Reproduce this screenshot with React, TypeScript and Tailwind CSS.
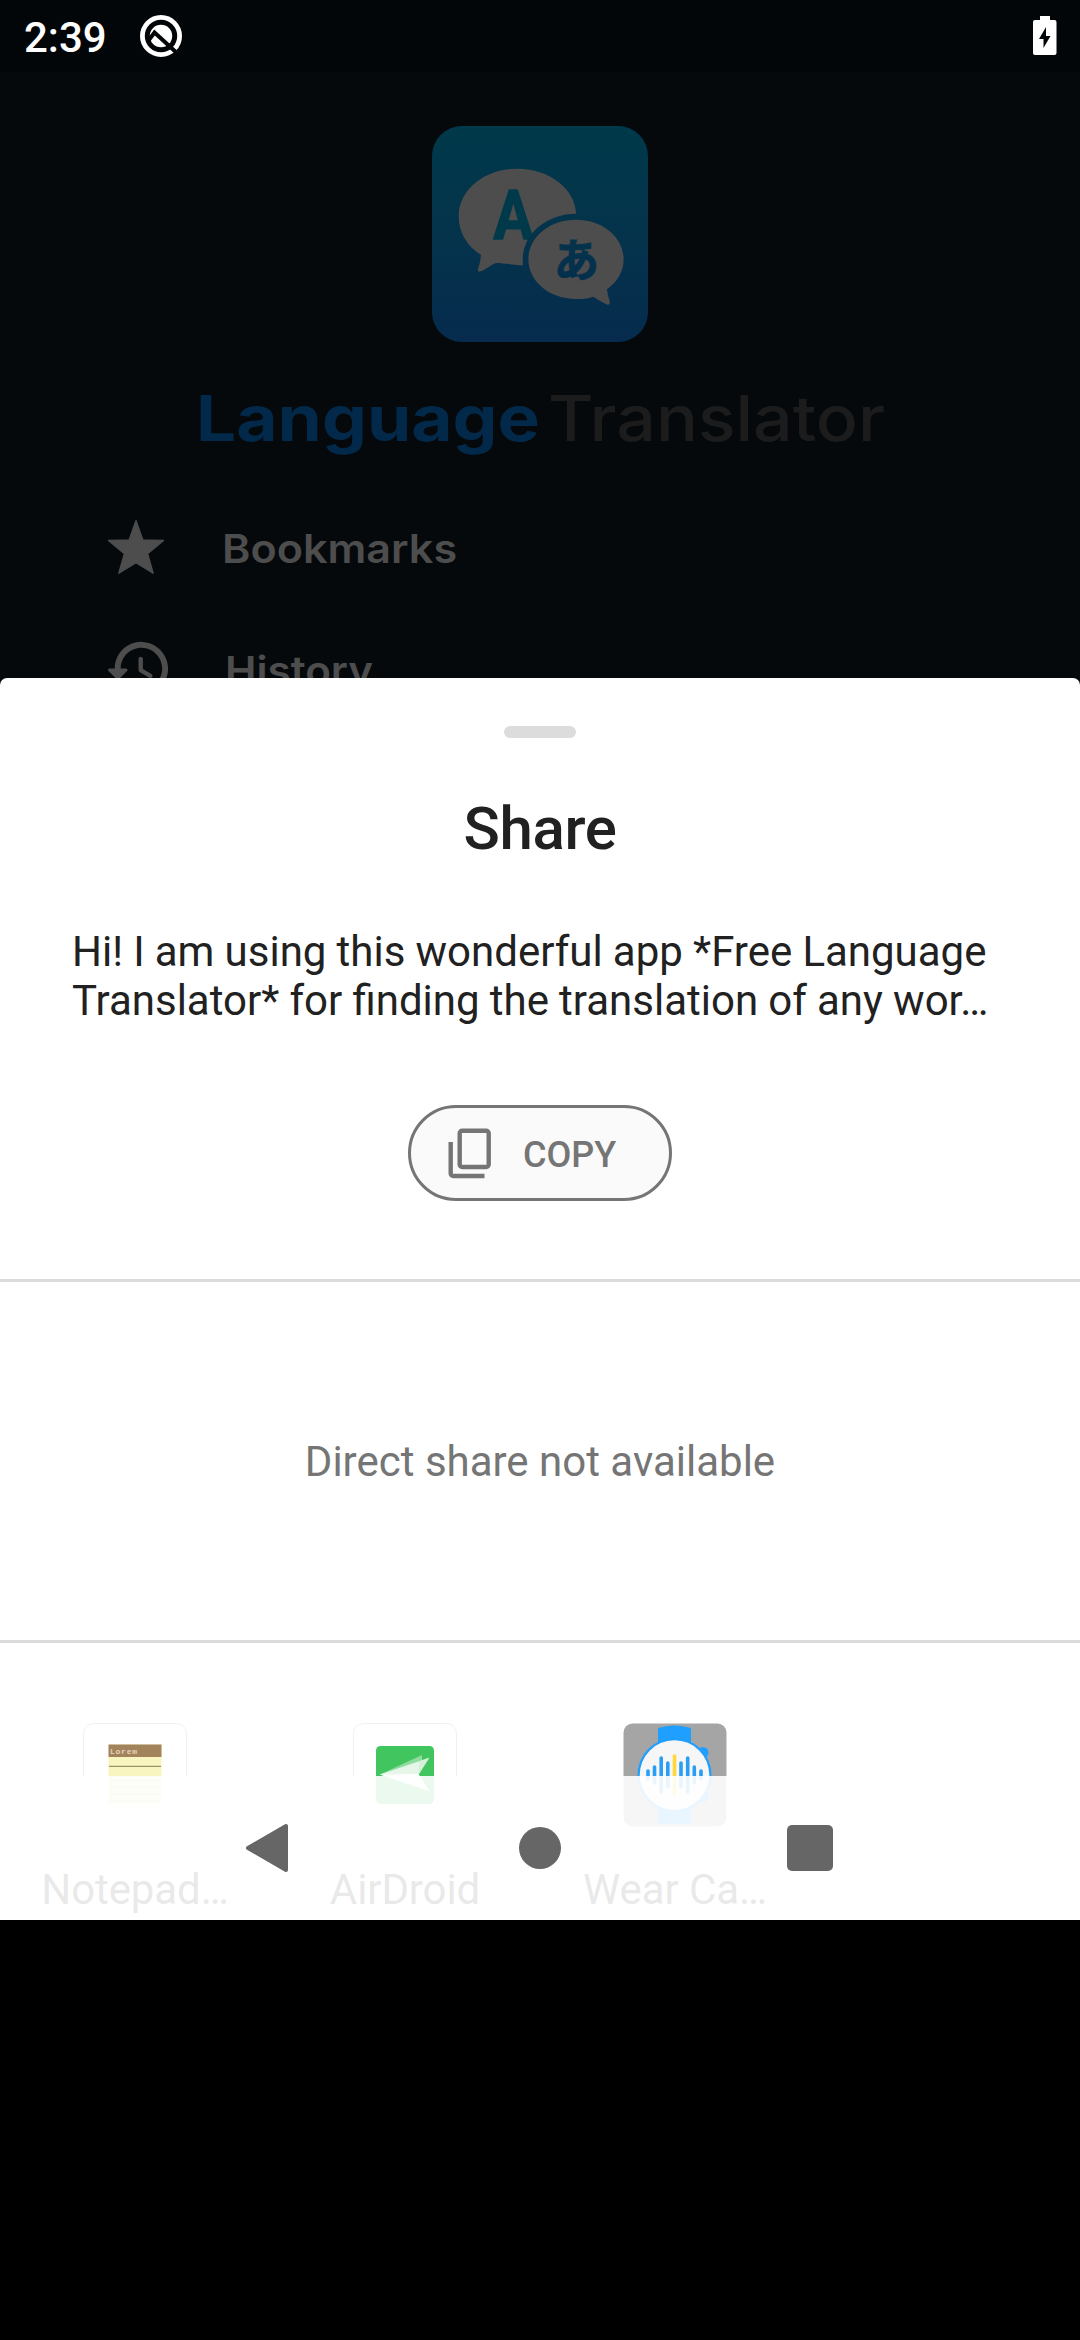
function StatusBar() {
  return (
    <div className="flex h-[72px] items-start justify-between bg-[#020609] pr-[23px] pl-6 text-white">
      <div className="flex">
        <span className="w-[116px] pt-[2px] text-[42px] leading-[72px] font-medium">2:39</span>
        <svg className="mt-[14px]" width="44" height="44" viewBox="0 0 44 44" fill="none">
          <circle cx="21" cy="22" r="18.6" stroke="#fff" strokeWidth="4.800" />
          <circle cx="21" cy="22" r="11.2" fill="#fff" />
          <path d="M8.500 26.500L14.500 18.500L38 40" stroke="#020609" strokeWidth="4" />
        </svg>
      </div>
      <svg className="mt-4" width="24" height="39" viewBox="0 0 24 39">
        <path
          fill="#fff"
          d="M7 0h10v4h4.500a2 2 0 0 1 2 2v31a2 2 0 0 1-2 2h-19.500a2 2 0 0 1-2-2v-31a2 2 0 0 1 2-2h5z"
        />
        <path fill="#020609" d="M13 11L6 23h4.500v9L17.500 20H13z" />
      </svg>
    </div>
  );
}

function AppLogo() {
  return (
    <svg className="size-[216px] rounded-[30px]" viewBox="96 78 648 648">
      <defs>
        <linearGradient id="sky" gradientUnits="userSpaceOnUse" x1="0" y1="78" x2="0" y2="726">
          <stop offset="0" stopColor="#00394a" />
          <stop offset="0.500" stopColor="#04334b" />
          <stop offset="1" stopColor="#062b4e" />
        </linearGradient>
      </defs>
      <rect x="96" y="78" width="648" height="648" fill="url(#sky)" />
      <path
        fill="#4d4d4d"
        d="M352 206C450 206 529 268 529 348C529 440 450 496 368 496C340 496 312 489 288 489C268 496 256 512 238 515Q230 514 235 504Q241 488 243 465C202 440 176 398 176 348C176 270 254 206 352 206Z"
      />
      <text
        transform="translate(280 416) scale(0.860 1)"
        fill="url(#sky)"
        stroke="url(#sky)"
        strokeWidth="4"
        fontFamily="Roboto"
        fontWeight="700"
        fontSize="208"
      >
        A
      </text>
      <ellipse cx="528" cy="478" rx="160" ry="137" fill="url(#sky)" />
      <path
        fill="#4d4d4d"
        d="M528 359C608 359 671 412 671 478C671 514 652 546 621 568Q623 588 630 606Q630 616 622 614Q600 604 580 590C564 596 546 597 528 597C448 597 385 544 385 478C385 412 448 359 528 359Z"
      />
      <text
        x="461"
        y="530"
        fill="url(#sky)"
        stroke="url(#sky)"
        strokeWidth="3"
        fontFamily="Noto Sans CJK JP"
        fontWeight="700"
        fontSize="136"
      >
        あ
      </text>
    </svg>
  );
}

function DimmedPage() {
  return (
    <div className="flex h-[606px] flex-col overflow-hidden pt-[54px] font-['Inter',sans-serif]">
      <div className="flex justify-center">
        <AppLogo />
      </div>
      <h1 className="mt-[36px] flex h-20 pl-[196px] text-[63px] leading-[80px] whitespace-nowrap">
        <span className="w-[352px] font-bold text-[#03294a]">
          <span className="inline-block origin-left scale-x-[1.130]">Language</span>
        </span>
        <span className="font-medium text-[#1c1c1c]">
          <span className="inline-block origin-left scale-x-[1.108]">Translator</span>
        </span>
      </h1>
      <div className="mt-[56px] flex h-[68px] pl-[102px] text-[#4d4d4d]">
        <svg width="68" height="68" viewBox="0 0 24 24" fill="currentColor">
          <path
            stroke="currentColor"
            strokeWidth="0.500"
            strokeLinejoin="round"
            d="M12 17.200L18.050 20.900L16.100 14L21.700 9.300L14.400 9.200L12 2.400L9.600 9.200L2.300 9.300L7.900 14L5.950 20.900Z"
          />
        </svg>
        <span className="ml-[52px] origin-left scale-x-[1.078] pt-[1px] text-[40px] leading-[68px] font-semibold">
          Bookmarks
        </span>
      </div>
      <div className="mt-[51px] flex h-[71px] shrink-0 pl-[103px] text-[#4d4d4d]">
        <svg width="71" height="71" viewBox="0 0 24 24" fill="currentColor">
          <path d="M13.260 3C8.170 2.860 4 6.950 4 12H2.210c-.45 0-.67.54-.35.850l2.790 2.800c.2.200.510.200.710 0l2.790-2.800c.310-.310.090-.850-.360-.850H6c0-3.900 3.180-7.050 7.100-7 3.720.050 6.850 3.180 6.900 6.900.050 3.910-3.100 7.100-7 7.100-1.610 0-3.100-.550-4.280-1.480-.400-.310-.960-.280-1.320.080-.420.420-.390 1.130.080 1.490C9 20.290 10.910 21 13 21c5.050 0 9.140-4.170 9-9.260C21.870 7.050 17.950 3.130 13.260 3zM12.750 8c-.410 0-.750.340-.750.750v3.680c0 .350.190.680.490.860l3.120 1.850c.360.210.820.090 1.030-.260.210-.360.090-.820-.260-1.030l-2.880-1.710v-3.400c0-.400-.340-.740-.750-.740z" />
        </svg>
        <span className="ml-[51px] origin-left scale-x-[1.055] pt-[2px] text-[40px] leading-[72px] font-semibold">
          History
        </span>
      </div>
    </div>
  );
}

function NotepadIcon() {
  return (
    <svg width="112" height="112" viewBox="79 1719 112 112">
      <rect x="83.500" y="1723.500" width="103" height="103" rx="10" fill="#fff" stroke="#f0f0f0" />
      <rect x="108.500" y="1744.500" width="53" height="60" fill="#f8f5c0" />
      <rect x="108.500" y="1744.500" width="53" height="12.500" fill="#a3835b" />
      <text x="110" y="1753.500" fontSize="8" fontFamily="Liberation Mono" fontWeight="700" fill="#e3d5c0" textLength="27">
        Lorem
      </text>
      <path d="M109 1766.300h52" stroke="#9a9264" strokeWidth="1.200" />
      <path d="M109 1780.500h52M109 1787.300h52M109 1794h52M109 1801h52" stroke="#c9c38c" strokeWidth="1.200" />
    </svg>
  );
}

function AirDroidIcon() {
  return (
    <svg width="112" height="112" viewBox="349 1719 112 112">
      <rect x="353.500" y="1723.500" width="103" height="103" rx="10" fill="#fff" stroke="#f0f0f0" />
      <rect x="376" y="1746" width="58" height="58" rx="4.500" fill="#40c55f" />
      <path d="M380 1774.500L422 1755V1762L418 1775Z" fill="#8fdc9f" />
      <path d="M380 1774.500L429.500 1757.500L418.500 1775Z" fill="#d5f1da" />
      <path d="M380 1774.500L419 1762L418.500 1775L429.500 1791Z" fill="#e6f7e9" />
      <path d="M380 1774.500L418.500 1774L429.500 1791Z" fill="#fff" />
    </svg>
  );
}

const BARS = [
  [648, 6],
  [654.5, 10],
  [661.2, 19],
  [667.8, 14],
  [674.5, 21],
  [681, 14],
  [687.7, 19],
  [694.3, 10],
  [701, 6],
];

function WearIcon() {
  return (
    <svg width="112" height="112" viewBox="619 1719 112 112">
      <rect x="623.500" y="1723.500" width="103" height="103" rx="9" fill="#a5a5a5" />
      <path d="M658 1728Q674.500 1723 691 1728V1824H658Z" fill="#1f9fff" />
      <circle cx="703" cy="1752.500" r="5.500" fill="#1f9fff" />
      <circle cx="703" cy="1797" r="5.500" fill="#1f9fff" />
      <circle cx="674.500" cy="1775" r="37" fill="#1f9fff" />
      <circle cx="674.500" cy="1775" r="34.800" fill="#f6f6f6" />
      {BARS.map(([x, h]) => (
        <path
          key={x}
          d={`M${x} ${1777 - h}V${1773 + h}`}
          stroke={x === 674.5 ? "#ffd83a" : "#2a9df4"}
          strokeWidth="3.600"
          strokeLinecap="round"
        />
      ))}
    </svg>
  );
}

const TARGETS = [
  { label: "Notepad…", icon: <NotepadIcon /> },
  { label: "AirDroid", icon: <AirDroidIcon /> },
  { label: "Wear Ca…", icon: <WearIcon /> },
];

function NavBar() {
  return (
    <div className="absolute inset-x-0 bottom-0 flex h-36 justify-center bg-white/90">
      <div className="grid w-[810px] grid-cols-3 place-items-center">
        <svg className="-translate-x-[3px]" width="48" height="50" viewBox="0 0 48 50">
          <path
            d="M5 25L43 3V47Z"
            fill="#666"
            stroke="#666"
            strokeWidth="4"
            strokeLinejoin="round"
          />
        </svg>
        <div className="size-[42px] rounded-full bg-[#666]" />
        <div className="size-[46px] rounded-[5px] bg-[#666]" />
      </div>
    </div>
  );
}

function ShareSheet() {
  return (
    <div className="relative flex h-[1242px] flex-col overflow-hidden rounded-t-[7px] bg-white pt-12">
      <div className="h-3 w-[72px] self-center rounded-full bg-[#dcdcdc]" />
      <h2 className="mt-[56px] text-center text-[60px] leading-[70px] font-medium tracking-[-0.4px] text-[#212121]">
        Share
      </h2>
      <p className="mt-[63px] pl-[72px] text-[42px] leading-[49px] [word-spacing:-0.25px] whitespace-nowrap text-[#212121]">
        Hi! I am using this wonderful app *Free Language
        <br />
        Translator* for finding the translation of any wor…
      </p>
      <button className="mt-20 flex h-24 w-[264px] items-center self-center rounded-full border-3 border-[#757575] bg-[#fafafa] pl-[37px] text-[#757575]">
        <svg width="44" height="51" viewBox="0 0 44 51" fill="none" stroke="currentColor" strokeWidth="4.400">
          <rect x="11.700" y="2.700" width="29" height="36.300" rx="2.500" />
          <path d="M2.700 14V45.500a2.500 2.500 0 0 0 2.500 2.500H36.500" />
        </svg>
        <span className="ml-[31px] pt-[3px] text-[36px] leading-[42px] font-medium">COPY</span>
      </button>
      <div className="mt-[78px] h-[3px] shrink-0 bg-[#dbdbdb]" />
      <div className="flex h-[358px] shrink-0 items-center justify-center pt-[1px] text-[42px] leading-[50px] text-[#757575]">
        Direct share not available
      </div>
      <div className="h-[3px] shrink-0 bg-[#dbdbdb]" />
      <div className="mt-[76px] grid grid-cols-4">
        {TARGETS.map((t) => (
          <div key={t.label} className="flex flex-col items-center">
            {t.icon}
            <span className="mt-[34px] text-[42px] leading-[50px] tracking-[-0.1px] whitespace-nowrap text-[#212121]">
              {t.label}
            </span>
          </div>
        ))}
      </div>
      <NavBar />
    </div>
  );
}

export default function App() {
  return (
    <div className="h-[2340px] w-[1080px] overflow-hidden bg-black font-['Roboto',sans-serif]">
      <div className="h-[1920px] bg-[#05090c]">
        <StatusBar />
        <DimmedPage />
        <ShareSheet />
      </div>
    </div>
  );
}
